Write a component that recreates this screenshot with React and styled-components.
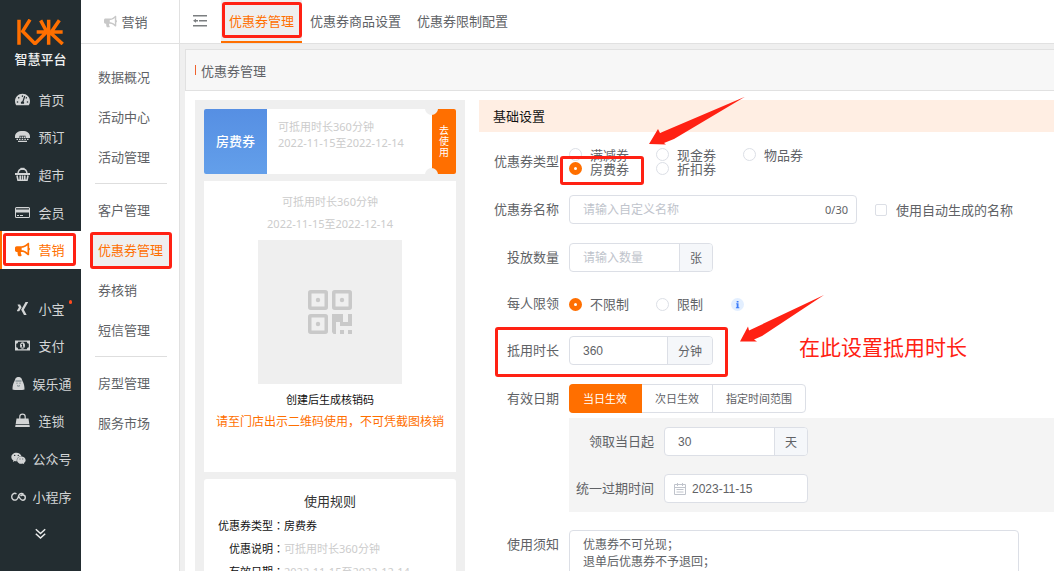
import React from "react";
import styled, { createGlobalStyle, css } from "styled-components";
import { FaTachometerAlt, FaBullhorn, FaXing, FaWeixin } from "react-icons/fa";

const ORANGE = "#ff6f00";
const MARK = "#ff2113";

const Global = createGlobalStyle`
  * { box-sizing: border-box; }
  body { margin: 0; background: #efefef; overflow: hidden; }
  body, button, input, textarea { font-family: "Noto Sans", "Noto Sans CJK SC", sans-serif; font-size: 13px; }
  a { color: inherit; text-decoration: none; }
  h1, h2, p, dl, dd { margin: 0; font-weight: 400; }
`;

const Page = styled.div`
  position: relative;
  display: flex;
  height: 100vh;
  overflow: hidden;
  color: #606266;
`;

/* ---------- primary navigation ---------- */
const Sidebar = styled.nav`
  width: 81px;
  flex: none;
  background: #232d31;
  color: #d3d5d6;
`;
const Brand = styled.div`
  height: 81px;
  padding-top: 19px;
  display: flex;
  flex-direction: column;
  align-items: center;
  font-size: 13px;
  line-height: 28px;
  font-weight: 500;
  color: #f2f3f3;
`;
const NavGroup = styled.div`
  display: grid;
  grid-auto-rows: 1fr;
  height: ${(p) => p.$height}px;
  margin-bottom: 21px;
`;
const NavItem = styled.a`
  display: flex;
  align-items: center;
  justify-content: center;
  gap: ${(p) => (p.$wide ? 6 : 8)}px;
  padding: 0 3px 1px 0;
  border-left: 2px solid transparent;
  white-space: nowrap;
  svg { width: 15px; height: 15px; flex: none; }
  ${(p) => p.$wide && css`padding-right: 0;`}
  ${(p) => p.$active && css`background: #fff; color: ${ORANGE}; border-color: ${ORANGE};`}
`;
const NavLabel = styled.span`
  position: relative;
`;
const Dot = styled.i`
  position: absolute;
  top: 1px;
  right: -7px;
  width: 3px;
  height: 4px;
  border-radius: 2px;
  background: #ff4b1f;
`;

/* ---------- secondary navigation ---------- */
const SubNav = styled.nav`
  width: 99px;
  flex: none;
  background: #fff;
  border-right: 1px solid #e1e1e1;
`;
const SubHead = styled.div`
  height: 44px;
  display: flex;
  align-items: center;
  justify-content: center;
  gap: 4px;
  padding-right: 8px;
  margin-bottom: 13px;
  border-bottom: 1px solid #e1e1e1;
  svg { color: #c8c8c8; }
`;
const SubItem = styled.a`
  display: flex;
  align-items: center;
  height: 40px;
  padding: 0 0 2px 17px;
  color: ${(p) => (p.$active ? ORANGE : "#606266")};
  background: ${(p) => (p.$active ? "#efefef" : "none")};
  ${(p) => p.$active && css`height: 34px; margin: 3px 8px 3px 9px; padding-left: 8px;`}
`;
const Rule = styled.hr`
  height: 1px;
  margin: 6px 12px 6px 14px;
  border: 0;
  background: #dedede;
`;

/* ---------- page frame ---------- */
const Main = styled.main`
  flex: 1;
  min-width: 0;
  display: flex;
  flex-direction: column;
`;
const TopBar = styled.header`
  display: flex;
  height: 44px;
  flex: none;
  background: #fff;
  border-bottom: 1px solid #e1e1e1;
`;
const Collapse = styled.button`
  display: flex;
  align-items: center;
  width: 41px;
  padding: 0 0 2px 13px;
  border: 0;
  background: none;
  color: #7b7e80;
`;
const Tab = styled.a`
  display: flex;
  align-items: center;
  padding: 0 8px;
  border-bottom: 2px solid ${(p) => (p.$active ? ORANGE : "transparent")};
  background: ${(p) => (p.$active ? "#efefef" : "none")};
  color: ${(p) => (p.$active ? ORANGE : "#606266")};
`;
const Panel = styled.section`
  flex: 1;
  min-height: 0;
  display: flex;
  flex-direction: column;
  margin: 5px 0 0 5px;
  background: #fff;
`;
const PanelHead = styled.div`
  display: flex;
  align-items: center;
  gap: 5px;
  height: 42px;
  flex: none;
  padding-left: 9px;
  background: #f7f7f7;
  border: 1px solid #e1e1e1;
  border-right: 0;
  &::before { content: ""; width: 1px; height: 10px; background: #f0622d; }
  h1 { font-size: 13px; }
`;
const PanelBody = styled.div`
  display: flex;
  align-items: flex-start;
  gap: 14px;
  padding: 9px 0 0 10px;
`;

/* ---------- coupon preview ---------- */
const Preview = styled.aside`
  width: 270px;
  flex: none;
  padding: 9px;
  background: #efefef;
  font-size: 11px;
  display: flex;
  flex-direction: column;
  gap: 7px;
`;
const Ticket = styled.div`
  position: relative;
  display: flex;
  height: 65px;
  background: #fff;
  border-radius: 2px;
  overflow: hidden;
`;
const TicketKind = styled.div`
  width: 63px;
  display: grid;
  place-items: center;
  padding-bottom: 2px;
  background: linear-gradient(#568fe3, #639fea);
  color: #fff;
  font-size: 13px;
  font-weight: 500;
`;
const TicketInfo = styled.div`
  flex: 1;
  padding: 10px 0 0 11px;
  line-height: 16px;
  color: #ccc;
`;
const TicketUse = styled.button`
  width: 24px;
  padding: 0 7px;
  border: 0;
  background: ${ORANGE};
  color: #fff;
  font-size: 10px;
  line-height: 11px;
`;
const Notch = styled.i`
  position: absolute;
  right: 18px;
  ${(p) => p.$side}: -7px;
  width: 13px;
  height: 13px;
  border-radius: 50%;
  background: #efefef;
`;
const CodeCard = styled.div`
  height: 291px;
  padding-top: 10px;
  display: flex;
  flex-direction: column;
  align-items: center;
  background: #fff;
  line-height: 22px;
  color: #111;
`;
const Muted = styled.p`
  color: #ccc;
`;
const CodeBox = styled.div`
  width: 144px;
  height: 144px;
  margin: 5px 0;
  display: grid;
  place-items: center;
  background: #efefef;
`;
const Warn = styled.p`
  font-size: 12px;
  color: ${ORANGE};
`;
const RulesCard = styled.div`
  padding: 10px 14px;
  background: #fff;
  border-radius: 3px;
  color: #111;
  line-height: 23px;
  h2 { font-size: 13px; text-align: center; line-height: 25px; color: #333; }
  dl { display: grid; grid-template-columns: 66px 1fr; }
  dt { justify-self: end; white-space: nowrap; }
`;
const RuleValue = styled.dd`
  color: ${(p) => (p.$muted ? "#ccc" : "#111")};
`;
const Colon = styled.span`
  font-family: "Noto Sans CJK TC", sans-serif;
  line-height: 1;
`;

/* ---------- form ---------- */
const Form = styled.form`
  flex: 1;
  min-width: 0;
`;
const FormHead = styled.h2`
  height: 32px;
  line-height: 32px;
  padding-left: 14px;
  margin-bottom: 15px;
  background: #ffeee3;
  color: #111;
  font-size: 13px;
`;
const Row = styled.div`
  display: flex;
  align-items: center;
  gap: 10px;
  min-height: ${(p) => (p.$short ? 26 : 29)}px;
  margin-bottom: ${(p) => (p.$tight ? 5 : 19)}px;
`;
const Label = styled.label`
  width: ${(p) => (p.$inner ? 85 : 80)}px;
  flex: none;
  padding-bottom: 2px;
  text-align: right;
  white-space: nowrap;
  line-height: 20px;
`;
const Choices = styled.div`
  display: grid;
  grid-template-columns: repeat(3, 87px);
  align-items: center;
  line-height: 14px;
`;
const Choice = styled.label`
  display: flex;
  align-items: center;
  gap: 8px;
  white-space: nowrap;
`;
const AutoName = styled(Choice)`
  margin-left: 8px;
  gap: 9px;
`;
const InfoSlot = styled.span`
  display: flex;
  margin-left: -12px;
`;
const Radio = styled.input.attrs({ type: "radio" })`
  appearance: none;
  width: 13px;
  height: 13px;
  flex: none;
  margin: 0;
  border: 1px solid #dcdfe6;
  border-radius: 50%;
  background: #fff;
  &:checked { border: 5px solid ${ORANGE}; }
`;
const Check = styled.input.attrs({ type: "checkbox" })`
  appearance: none;
  width: 12px;
  height: 12px;
  margin: 0;
  border: 1px solid #dcdfe6;
  border-radius: 2px;
  background: #fff;
`;
const Field = styled.div`
  display: flex;
  align-items: center;
  width: ${(p) => (p.$long ? 288 : 144)}px;
  height: 29px;
  border: 1px solid #dcdfe6;
  border-radius: 4px;
  background: #fff;
  overflow: hidden;
  font-size: 12px;
  svg { flex: none; margin-left: 9px; }
`;
const Input = styled.input`
  flex: 1;
  min-width: 0;
  height: 100%;
  border: 0;
  outline: 0;
  padding: 0 0 0 ${(p) => (p.$icon ? 6 : 13)}px;
  background: none;
  color: #606266;
  font-family: "Liberation Sans", "Noto Sans CJK SC", sans-serif;
  font-size: 12px;
  &::placeholder { color: #c0c4cc; }
`;
const Count = styled.span`
  padding-right: 8px;
  font-size: 11px;
`;
const Unit = styled.span`
  display: grid;
  place-items: center;
  height: 100%;
  padding: 0 10px;
  border-left: 1px solid #dcdfe6;
  background: #f5f7fa;
`;
const Segments = styled.div`
  display: flex;
  height: 29px;
  border: 1px solid #dcdfe6;
  border-radius: 4px;
  background: #fff;
`;
const Segment = styled.button.attrs({ type: "button" })`
  border: 0;
  border-right: 1px solid #dcdfe6;
  padding: 0 13px 2px;
  background: none;
  color: #606266;
  font-size: 11px;
  &:last-child { border-right: 0; }
  ${(p) => p.$active && css`
    margin: -1px 0 -1px -1px;
    padding: 0 14px 2px;
    border-color: ${ORANGE};
    border-radius: 4px 0 0 4px;
    background: ${ORANGE};
    color: #fff;
  `}
`;
const Validity = styled.div`
  display: flex;
  flex-direction: column;
  gap: 18px;
  margin: 0 0 18px 90px;
  padding: 9px 0;
  background: #f4f4f4;
  ${Row} { margin: 0; }
`;
const NotesRow = styled.div`
  display: flex;
  gap: 10px;
  padding-right: 35px;
  ${Label} { padding-top: 4px; }
`;
const Notes = styled.textarea`
  flex: 1;
  height: 90px;
  padding: 5px 13px;
  border: 1px solid #dcdfe6;
  border-radius: 4px;
  resize: none;
  outline: 0;
  color: #606266;
  font-size: 12px;
  line-height: 17px;
`;

/* ---------- tutorial marks drawn over the page ---------- */
const Mark = styled.div`
  position: absolute;
  left: ${(p) => p.$x}px;
  top: ${(p) => p.$y}px;
  width: ${(p) => p.$w}px;
  height: ${(p) => p.$h}px;
  border: 3px solid ${MARK};
  border-radius: 3px;
  pointer-events: none;
`;
const Arrow = styled.svg`
  position: absolute;
  left: ${(p) => p.$x}px;
  top: ${(p) => p.$y}px;
  fill: ${MARK};
  pointer-events: none;
`;
const MarkText = styled.p`
  position: absolute;
  left: 799px;
  top: 332px;
  font-size: 21px;
  line-height: 30px;
  color: ${MARK};
  white-space: nowrap;
`;

const Logo = () => (
  <svg width="47" height="26" viewBox="33 28 141 78" fill="none" stroke={ORANGE} strokeWidth="10.500" strokeLinejoin="round">
    <path d="M39 30v75M72 30 50 65l37 37 34-34M92 67h78M128 30v75M104 32l17 32M160 32l-22 32M134 70l36 33" />
  </svg>
);
const PhoneIcon = () => (
  <svg viewBox="0 0 15 15" fill="currentColor">
    <path d="M0 7.500C0 4 3 2 7.500 2S15 4 15 7.500V9h-4.500V6.800h-6V9H0z" />
    <path d="M5.200 7.500h1.200V9H5.200zM7 7.500h1.200V9H7zM8.800 7.500H10V9H8.800zM1.500 9.800H3v1.200H1.500zM4 9.800h1.500v1.200H4zM6.700 9.800h1.500v1.200H6.700zM9.400 9.800h1.500v1.200H9.400zM12 9.800h1.500v1.200H12zM3 11.800h9V13H3z" />
  </svg>
);
const BasketIcon = () => (
  <svg viewBox="0 0 15 15" fill="none" stroke="currentColor">
    <path d="M3 6.500C3.200 3 5 2 7.500 2S11.800 3 12 6.500" strokeWidth="1.400" />
    <path d="M5.500 1.800h4" strokeWidth="2" />
    <path d="M0 7h15" strokeWidth="2" />
    <path d="M2 8.500 3 13.300h9l1-4.800M5.200 8.500v4.500M7.500 8.500v4.500M9.800 8.500v4.500" strokeWidth="1.600" />
  </svg>
);
const CardIcon = () => (
  <svg viewBox="0 0 15 15" fill="currentColor">
    <path fillRule="evenodd" d="M1.500 2h12A1.500 1.500 0 0 1 15 3.500v8a1.500 1.500 0 0 1-1.500 1.500h-12A1.500 1.500 0 0 1 0 11.500v-8A1.500 1.500 0 0 1 1.500 2zM1 3.200v1.300h13V3.200zM1 7.500V12h13V7.500z" />
    <path d="M2 10h2v1H2zM5 10h3v1H5z" />
  </svg>
);
const MoneyIcon = () => (
  <svg viewBox="0 0 15 15" fill="currentColor">
    <path fillRule="evenodd" d="M0 2.500h15v10H0zM3.200 3.700A2.200 2.200 0 0 1 1.200 5.700v3.600a2.200 2.200 0 0 1 2 2h8.600a2.200 2.200 0 0 1 2-2V5.700a2.200 2.200 0 0 1-2-2z" />
    <path fillRule="evenodd" d="M7.500 4.300c1.600 0 2.500 1.400 2.500 3.200s-.9 3.200-2.500 3.200S5 9.300 5 7.500s.9-3.200 2.500-3.200zM7 5.700l-.9.900.5.500.4-.2v1.800h-.7v.8h2.400v-.8H8v-3z" />
  </svg>
);
const GhostIcon = () => (
  <svg viewBox="0 0 15 15">
    <path d="M4.500 2.500C5.500.5 9.500.5 10.500 2.500l1 2.500c1.500 2.500 2 5 2 8.500-2 .8-10 .8-12 0 0-3.500.5-6 2-8.500z" fill="currentColor" />
    <path d="M4.500 5h6M5.500 7.200h1M8.500 7.200h1M6 9.500c1 .8 2 .8 3 0" fill="none" stroke="#5d7076" strokeWidth=".9" />
  </svg>
);
const BagIcon = () => (
  <svg viewBox="0 0 15 15" fill="currentColor">
    <path d="M1.500 5.500h12L14.300 11H.7zM.5 11.700h14L14.800 14H.2z" />
    <path d="M4.800 6.500V3.800a2.700 2.700 0 0 1 5.400 0v2.700" fill="none" stroke="currentColor" strokeWidth="1.200" />
  </svg>
);
const LoopIcon = () => (
  <svg viewBox="0 0 15 15" fill="none" stroke="currentColor" strokeWidth="1.400">
    <path d="M5.500 4.800C3 3.500.7 5.200.7 7.800c0 2.500 2.300 3.800 4.300 3.200 2.500-.8 2-3.500 3-5 1-1.700 3.500-2 4.500-.6M7.500 6.800c1 2.200 2 4.400 4.200 4.400 1.500 0 2.600-1.200 2.600-2.700s-1.200-2.500-2.600-2.500c-1 0-1.700.4-2.200 1" />
  </svg>
);
const ChevronsIcon = () => (
  <svg viewBox="0 0 15 15" fill="none" stroke="#eceded" strokeWidth="1.500">
    <path d="m2.800 3.200 4.700 4.300 4.700-4.300M2.800 7.700 7.500 12l4.700-4.300" />
  </svg>
);
const MenuIcon = () => (
  <svg width="14" height="12" viewBox="0 0 14 12" fill="currentColor">
    <path d="M0 0h14v1.500H0zM6 5h8v1.500H6zM0 10h14v1.500H0zM0 5.700 3 3.700v1.400h2v1.300H3v1.400z" />
  </svg>
);
const QrIcon = () => (
  <svg width="44" height="44" viewBox="0 0 44 44" fill="#c9c9c9">
    {[[0, 0], [24, 0], [0, 24]].map(([x, y]) => (
      <g key={`${x}-${y}`} transform={`translate(${x} ${y})`}>
        <rect x="1.750" y="1.750" width="16.500" height="16.500" rx="1" fill="none" stroke="#c9c9c9" strokeWidth="3.500" />
        <circle cx="10" cy="10" r="2.200" />
      </g>
    ))}
    <path d="M24 24h11v8h5v-8h4v12H32v-4h-4v12h-2.500L24 42zM32 40h4v4h-4zM40 40h4v4h-4z" />
  </svg>
);
const CalendarIcon = () => (
  <svg width="12" height="12" viewBox="0 0 12 12" fill="none" stroke="#c0c4cc">
    <path d="M.5 1.500h11v10H.5zM.5 4.500h11M3.500 0v3M8.500 0v3M2.500 6.500h7M2.500 9h7" />
  </svg>
);
const InfoIcon = () => (
  <svg width="13" height="13" viewBox="0 0 13 13" role="img" aria-label="说明">
    <circle cx="6.500" cy="6.500" r="6.500" fill="#e3efff" />
    <path d="M5.700 3h1.800v1.500H5.700zM5.200 5.300h2.300v3.900h.8v1.100H4.900V9.200h.8V6.300h-.5z" fill="#3a7bfa" />
  </svg>
);

const PRIMARY = [
  ["首页", FaTachometerAlt],
  ["预订", PhoneIcon],
  ["超市", BasketIcon],
  ["会员", CardIcon],
  ["营销", FaBullhorn],
];
const SECONDARY = [
  ["小宝", FaXing],
  ["支付", MoneyIcon],
  ["娱乐通", GhostIcon],
  ["连锁", BagIcon],
  ["公众号", FaWeixin],
  ["小程序", LoopIcon],
];
const SUB = [
  ["数据概况", "活动中心", "活动管理"],
  ["客户管理", "优惠券管理", "券核销", "短信管理"],
  ["房型管理", "服务市场"],
];
const TABS = ["优惠券管理", "优惠券商品设置", "优惠券限制配置"];
const TYPES = ["满减券", "现金券", "物品券", "房费券", "折扣券"];
const RULES = [
  ["优惠券类型", "房费券", false],
  ["优惠说明", "可抵用时长360分钟", true],
  ["有效日期", "2022-11-15至2022-12-14", true],
];
const MARKS = [
  [222, 2, 80, 36],
  [3, 233, 73, 33],
  [90, 232, 82, 37],
  [560, 156, 84, 29],
  [495, 327, 233, 50],
];

function NavLink({ name, Icon }) {
  return (
    <NavItem href="#" $active={name === "营销"} $wide={name.length > 2}>
      <Icon />
      <NavLabel>
        {name}
        {name === "小宝" && <Dot />}
      </NavLabel>
    </NavItem>
  );
}

export default function App() {
  return (
    <Page>
      <Global />
      <Sidebar>
        <Brand>
          <Logo />
          智慧平台
        </Brand>
        <NavGroup $height={188}>
          {PRIMARY.map(([name, Icon]) => <NavLink key={name} name={name} Icon={Icon} />)}
        </NavGroup>
        <NavGroup $height={263}>
          {SECONDARY.map(([name, Icon]) => <NavLink key={name} name={name} Icon={Icon} />)}
          <NavItem href="#" aria-label="更多"><ChevronsIcon /></NavItem>
        </NavGroup>
      </Sidebar>

      <SubNav>
        <SubHead><FaBullhorn />营销</SubHead>
        {SUB.map((group, i) => (
          <React.Fragment key={group[0]}>
            {i > 0 && <Rule />}
            {group.map((name) => (
              <SubItem key={name} href="#" $active={name === "优惠券管理"}>{name}</SubItem>
            ))}
          </React.Fragment>
        ))}
      </SubNav>

      <Main>
        <TopBar>
          <Collapse aria-label="收起菜单"><MenuIcon /></Collapse>
          {TABS.map((name, i) => <Tab key={name} href="#" $active={i === 0}>{name}</Tab>)}
        </TopBar>
        <Panel>
          <PanelHead><h1>优惠券管理</h1></PanelHead>
          <PanelBody>
            <Preview>
              <Ticket>
                <TicketKind>房费券</TicketKind>
                <TicketInfo>
                  <p>可抵用时长360分钟</p>
                  <p>2022-11-15至2022-12-14</p>
                </TicketInfo>
                <TicketUse>去使用</TicketUse>
                <Notch $side="top" />
                <Notch $side="bottom" />
              </Ticket>
              <CodeCard>
                <Muted>可抵用时长360分钟</Muted>
                <Muted>2022-11-15至2022-12-14</Muted>
                <CodeBox><QrIcon /></CodeBox>
                <p>创建后生成核销码</p>
                <Warn>请至门店出示二维码使用，不可凭截图核销</Warn>
              </CodeCard>
              <RulesCard>
                <h2>使用规则</h2>
                <dl>
                  {RULES.map(([term, value, muted]) => (
                    <React.Fragment key={term}>
                      <dt>{term}<Colon>：</Colon></dt>
                      <RuleValue $muted={muted}>{value}</RuleValue>
                    </React.Fragment>
                  ))}
                </dl>
              </RulesCard>
            </Preview>

            <Form>
              <FormHead>基础设置</FormHead>
              <Row>
                <Label as="span">优惠券类型</Label>
                <Choices>
                  {TYPES.map((name) => (
                    <Choice key={name}>
                      <Radio name="type" defaultChecked={name === "房费券"} />
                      {name}
                    </Choice>
                  ))}
                </Choices>
              </Row>
              <Row>
                <Label htmlFor="name">优惠券名称</Label>
                <Field $long>
                  <Input id="name" placeholder="请输入自定义名称" />
                  <Count>0/30</Count>
                </Field>
                <AutoName><Check />使用自动生成的名称</AutoName>
              </Row>
              <Row>
                <Label htmlFor="amount">投放数量</Label>
                <Field><Input id="amount" placeholder="请输入数量" /><Unit>张</Unit></Field>
              </Row>
              <Row $short>
                <Label as="span">每人限领</Label>
                <Choices>
                  <Choice><Radio name="limit" defaultChecked />不限制</Choice>
                  <Choice><Radio name="limit" />限制</Choice>
                  <InfoSlot><InfoIcon /></InfoSlot>
                </Choices>
              </Row>
              <Row>
                <Label htmlFor="minutes">抵用时长</Label>
                <Field><Input id="minutes" defaultValue="360" /><Unit>分钟</Unit></Field>
              </Row>
              <Row $tight>
                <Label as="span">有效日期</Label>
                <Segments>
                  <Segment $active>当日生效</Segment>
                  <Segment>次日生效</Segment>
                  <Segment>指定时间范围</Segment>
                </Segments>
              </Row>
              <Validity>
                <Row>
                  <Label $inner htmlFor="days">领取当日起</Label>
                  <Field><Input id="days" defaultValue="30" /><Unit>天</Unit></Field>
                </Row>
                <Row>
                  <Label $inner htmlFor="expiry">统一过期时间</Label>
                  <Field><CalendarIcon /><Input id="expiry" $icon defaultValue="2023-11-15" /></Field>
                </Row>
              </Validity>
              <NotesRow>
                <Label htmlFor="notes">使用须知</Label>
                <Notes id="notes" defaultValue={"优惠券不可兑现；\n退单后优惠券不予退回；"} />
              </NotesRow>
            </Form>
          </PanelBody>
        </Panel>
      </Main>

      {MARKS.map(([x, y, w, h]) => <Mark key={`${x}-${y}`} $x={x} $y={y} $w={w} $h={h} />)}
      <Arrow $x={648} $y={96} width="98" height="50" viewBox="0 0 98 50">
        <path d="M97 .8 12 37 10 33 1 48 18 48.500 16 47 26 43z" />
      </Arrow>
      <Arrow $x={739} $y={294} width="86" height="50" viewBox="0 0 86 50">
        <path d="M85 1 10 36.500 9 32.500 1 47.500 18 47.500 15 45.500 23 42z" />
      </Arrow>
      <MarkText>在此设置抵用时长</MarkText>
    </Page>
  );
}
